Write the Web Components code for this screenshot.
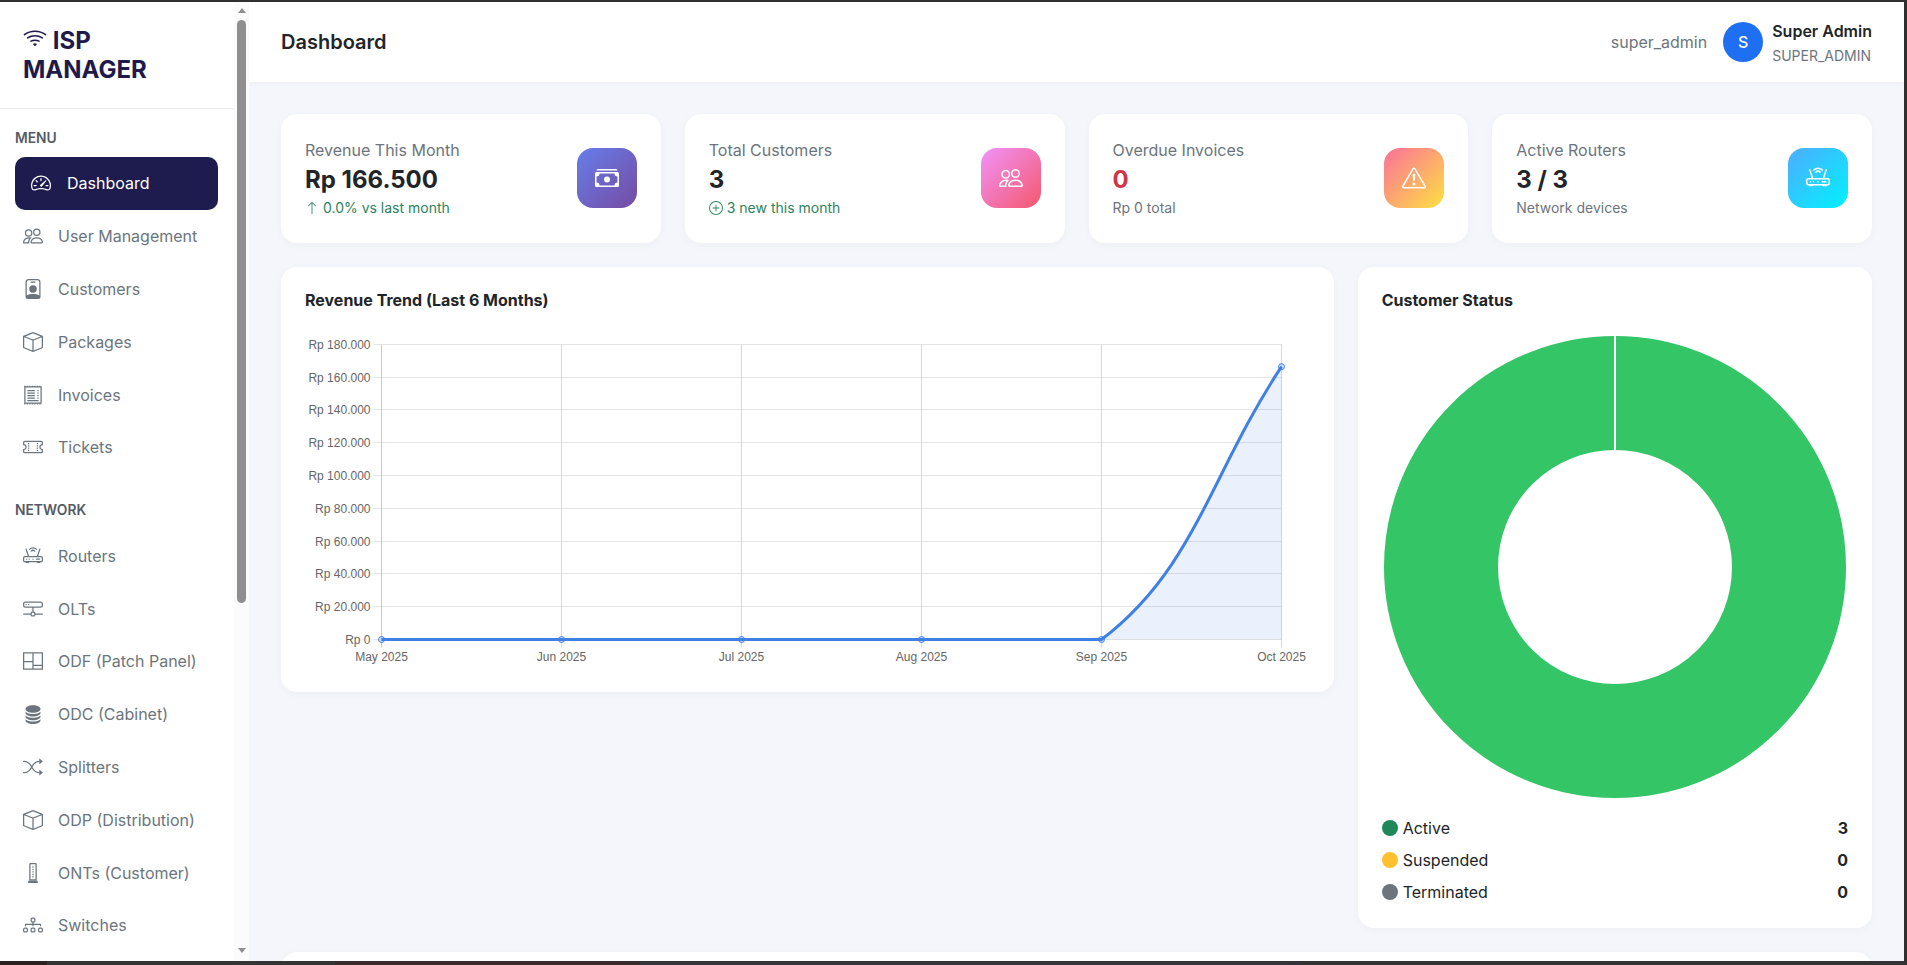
<!DOCTYPE html>
<html lang="en">
<head>
<meta charset="utf-8">
<title>ISP Manager</title>
<style>
  html, body { margin: 0; height: 100%; overflow: hidden; }
  body { font-family: Inter, "Liberation Sans", sans-serif; color: #212529; }
</style>
</head>
<body>
<app-shell>
  <side-nav slot="nav">
    <nav-label>MENU</nav-label>
    <nav-item icon="speedometer" active>Dashboard</nav-item>
    <nav-item icon="people">User Management</nav-item>
    <nav-item icon="badge">Customers</nav-item>
    <nav-item icon="box">Packages</nav-item>
    <nav-item icon="receipt">Invoices</nav-item>
    <nav-item icon="ticket">Tickets</nav-item>
    <nav-label network>NETWORK</nav-label>
    <nav-item icon="router">Routers</nav-item>
    <nav-item icon="hdd">OLTs</nav-item>
    <nav-item icon="panel">ODF (Patch Panel)</nav-item>
    <nav-item icon="database">ODC (Cabinet)</nav-item>
    <nav-item icon="shuffle">Splitters</nav-item>
    <nav-item icon="box">ODP (Distribution)</nav-item>
    <nav-item icon="modem">ONTs (Customer)</nav-item>
    <nav-item icon="diagram">Switches</nav-item>
  </side-nav>
  <top-bar slot="top"></top-bar>
  <stat-row>
    <stat-card label="Revenue This Month" value="Rp 166.500" sub="0.0% vs last month" subicon="arrow" icon="cash" tone="up" grad="#667eea,#764ba2"></stat-card>
    <stat-card label="Total Customers" value="3" sub="3 new this month" subicon="plus" icon="people" tone="up" grad="#f093fb,#f5576c"></stat-card>
    <stat-card label="Overdue Invoices" value="0" sub="Rp 0 total" icon="warning" tone="muted" valuecolor="#d13447" grad="#fa709a,#fee140"></stat-card>
    <stat-card label="Active Routers" value="3 / 3" sub="Network devices" icon="router" tone="muted" grad="#4facfe,#00f2fe"></stat-card>
  </stat-row>
  <chart-row>
    <trend-chart></trend-chart>
    <status-chart></status-chart>
  </chart-row>
  <next-card></next-card>
</app-shell>

<script>
const ICONS = {
  wifi: '<path d="M15.384 6.115a.485.485 0 0 0-.047-.736A12.444 12.444 0 0 0 8 3C5.259 3 2.723 3.882.663 5.379a.485.485 0 0 0-.048.736.518.518 0 0 0 .668.05A11.448 11.448 0 0 1 8 4c2.507 0 4.827.802 6.716 2.164.205.148.49.13.668-.049z"/><path d="M13.229 8.271a.482.482 0 0 0-.063-.745A9.455 9.455 0 0 0 8 6c-1.905 0-3.68.56-5.166 1.526a.48.48 0 0 0-.063.745.525.525 0 0 0 .652.065A8.46 8.46 0 0 1 8 7a8.46 8.46 0 0 1 4.576 1.336c.206.132.48.108.653-.065zm-2.183 2.183c.226-.226.185-.605-.1-.75A6.473 6.473 0 0 0 8 9c-1.06 0-2.062.254-2.946.704-.285.145-.326.524-.1.75l.015.015c.16.16.407.19.611.09A5.478 5.478 0 0 1 8 10c.868 0 1.69.201 2.42.56.203.1.45.07.61-.091l.016-.015zM9.06 12.44c.196-.196.198-.52-.04-.66A1.99 1.99 0 0 0 8 11.5a1.99 1.99 0 0 0-1.02.28c-.238.14-.236.464-.04.66l.706.706a.5.5 0 0 0 .707 0l.707-.707z"/>',
  speedometer: '<path d="M8 4a.5.5 0 0 1 .5.5V6a.5.5 0 0 1-1 0V4.5A.5.5 0 0 1 8 4M3.732 5.732a.5.5 0 0 1 .707 0l.915.914a.5.5 0 1 1-.708.708l-.914-.915a.5.5 0 0 1 0-.707M2 10a.5.5 0 0 1 .5-.5h1.586a.5.5 0 0 1 0 1H2.5A.5.5 0 0 1 2 10m9.5 0a.5.5 0 0 1 .5-.5h1.5a.5.5 0 0 1 0 1H12a.5.5 0 0 1-.5-.5m.754-4.246a.389.389 0 0 0-.527-.02L7.547 9.31a.91.91 0 1 0 1.302 1.258l3.434-4.297a.389.389 0 0 0-.029-.518z"/><path fill-rule="evenodd" d="M0 10a8 8 0 1 1 15.547 2.661c-.442 1.253-1.845 1.602-2.932 1.25C11.309 13.488 9.475 13 8 13c-1.474 0-3.31.488-4.615.911-1.087.352-2.49.003-2.932-1.25A7.988 7.988 0 0 1 0 10m8-7a7 7 0 0 0-6.603 9.329c.203.575.923.876 1.68.63C4.397 12.533 6.358 12 8 12s3.604.532 4.923.96c.757.245 1.477-.056 1.68-.631A7 7 0 0 0 8 3"/>',
  people: '<path d="M15 14s1 0 1-1-1-4-5-4-5 3-5 4 1 1 1 1zm-7.978-1A.261.261 0 0 1 7 12.996c.001-.264.167-1.03.76-1.72C8.312 10.629 9.282 10 11 10c1.717 0 2.687.63 3.24 1.276.593.69.758 1.457.76 1.72l-.008.002a.274.274 0 0 1-.014.002H7.022ZM11 7a2 2 0 1 0 0-4 2 2 0 0 0 0 4m3-2a3 3 0 1 1-6 0 3 3 0 0 1 6 0M6.936 9.28a5.88 5.88 0 0 0-1.23-.247A7.35 7.35 0 0 0 5 9c-4 0-5 3-5 4 0 .667.333 1 1 1h4.216A2.238 2.238 0 0 1 5 13c0-1.01.377-2.042 1.09-2.904.243-.294.526-.569.846-.816M4.92 10A5.493 5.493 0 0 0 4 13H1c0-.26.164-1.03.76-1.724.545-.636 1.492-1.256 3.16-1.275ZM1.5 5.5a3 3 0 1 1 6 0 3 3 0 0 1-6 0m3-2a2 2 0 1 0 0 4 2 2 0 0 0 0-4"/>',
  badge: '<path d="M6.5 2a.5.5 0 0 0 0 1h3a.5.5 0 0 0 0-1zM11 8a3 3 0 1 1-6 0 3 3 0 0 1 6 0"/><path d="M4.5 0A2.5 2.5 0 0 0 2 2.5V14a2 2 0 0 0 2 2h8a2 2 0 0 0 2-2V2.5A2.5 2.5 0 0 0 11.5 0zM3 2.5A1.5 1.5 0 0 1 4.5 1h7A1.5 1.5 0 0 1 13 2.5v10.795a4.2 4.2 0 0 0-.776-.492C11.392 12.387 10.063 12 8 12s-3.392.387-4.224.803a4.2 4.2 0 0 0-.776.492z"/>',
  box: '<path d="M8.186 1.113a.5.5 0 0 0-.372 0L1.846 3.5 8 5.961 14.154 3.5zM15 4.239l-6.5 2.6v7.922l6.5-2.6V4.24zM7.5 14.762V6.838L1 4.239v7.925zM7.443.184a1.5 1.5 0 0 1 1.114 0l7.129 2.852A.5.5 0 0 1 16 3.5v8.662a1 1 0 0 1-.629.928l-7.185 2.874a.5.5 0 0 1-.372 0L.63 13.09a1 1 0 0 1-.63-.928V3.5a.5.5 0 0 1 .314-.464z"/>',
  receipt: '<path d="M3.5 4h6v1h-6zm0 2h6v1h-6zm0 2h6v1h-6zm0 2h6v1h-6zm8-6h1v1h-1zm0 2h1v1h-1zm0 2h1v1h-1zm0 2h1v1h-1zm-8 2h9v1h-9z"/><path fill="none" stroke="currentColor" stroke-width="1" d="M1.5 1.5 h13 v13 h-13z"/><path fill="none" stroke="currentColor" stroke-width="1" stroke-dasharray="1 1" d="M1 1h14M1 15h14"/>',
  ticket: '<path d="M4 4.85v.9h1v-.9H4Zm7 0v.9h1v-.9h-1Zm-7 1.8v.9h1v-.9H4Zm7 0v.9h1v-.9h-1Zm-7 1.8v.9h1v-.9H4Zm7 0v.9h1v-.9h-1Zm-7 1.8v.9h1v-.9H4Zm7 0v.9h1v-.9h-1Z"/><path d="M1.5 3A1.5 1.5 0 0 0 0 4.5V6a.5.5 0 0 0 .5.5 1.5 1.5 0 1 1 0 3 .5.5 0 0 0-.5.5v1.5A1.5 1.5 0 0 0 1.5 13h13a1.5 1.5 0 0 0 1.5-1.5V10a.5.5 0 0 0-.5-.5 1.5 1.5 0 0 1 0-3A.5.5 0 0 0 16 6V4.5A1.5 1.5 0 0 0 14.5 3h-13ZM1 4.5a.5.5 0 0 1 .5-.5h13a.5.5 0 0 1 .5.5v1.05a2.5 2.5 0 0 0 0 4.9v1.05a.5.5 0 0 1-.5.5h-13a.5.5 0 0 1-.5-.5v-1.05a2.5 2.5 0 0 0 0-4.9V4.5Z"/>',
  router: '<path d="M5.525 3.025a3.5 3.5 0 0 1 4.95 0 .5.5 0 1 0 .707-.707 4.5 4.5 0 0 0-6.364 0 .5.5 0 0 0 .707.707"/><path d="M6.94 4.44a1.5 1.5 0 0 1 2.12 0 .5.5 0 0 0 .708-.708 2.5 2.5 0 0 0-3.536 0 .5.5 0 0 0 .707.707Z"/><path d="M2.974 2.342a.5.5 0 1 0-.948.316L3.806 8H1.5A1.5 1.5 0 0 0 0 9.5v2A1.5 1.5 0 0 0 1.5 13H2a.5.5 0 0 0 .5.5h2A.5.5 0 0 0 5 13h6a.5.5 0 0 0 .5.5h2a.5.5 0 0 0 .5-.5h.5a1.5 1.5 0 0 0 1.5-1.5v-2A1.5 1.5 0 0 0 14.5 8h-2.306l1.78-5.342a.5.5 0 1 0-.948-.316L11.14 8H4.86zM14.5 9a.5.5 0 0 1 .5.5v2a.5.5 0 0 1-.5.5h-13a.5.5 0 0 1-.5-.5v-2a.5.5 0 0 1 .5-.5z"/><path d="M8.5 10.5a.5.5 0 1 1-1 0 .5.5 0 0 1 1 0m-5 0a.5.5 0 1 1-1 0 .5.5 0 0 1 1 0m2 0a.5.5 0 1 1-1 0 .5.5 0 0 1 1 0m5-.5h3v1h-3z"/>',
  hdd: '<path d="M4.5 5a.5.5 0 1 0 0-1 .5.5 0 0 0 0 1M3 4.5a.5.5 0 1 1-1 0 .5.5 0 0 1 1 0"/><path d="M0 4a2 2 0 0 1 2-2h12a2 2 0 0 1 2 2v1a2 2 0 0 1-2 2H8.5v3a1.5 1.5 0 0 1 1.5 1.5h5.5a.5.5 0 0 1 0 1H10A1.5 1.5 0 0 1 8.5 14h-1A1.5 1.5 0 0 1 6 12.5H.5a.5.5 0 0 1 0-1H6A1.5 1.5 0 0 1 7.5 10V7H2a2 2 0 0 1-2-2zm1 0v1a1 1 0 0 0 1 1h12a1 1 0 0 0 1-1V4a1 1 0 0 0-1-1H2a1 1 0 0 0-1 1m6 7.5v1a.5.5 0 0 0 .5.5h1a.5.5 0 0 0 .5-.5v-1a.5.5 0 0 0-.5-.5h-1a.5.5 0 0 0-.5.5"/>',
  panel: '<path fill="none" stroke="currentColor" d="M.5 1.5h15v13H.5zM8 1.5V14.5M.5 8.5H8M8 11.5h7.5"/>',
  database: '<path d="M3.904 1.777C4.978 1.289 6.427 1 8 1s3.022.289 4.096.777C13.125 2.245 14 2.993 14 4s-.875 1.755-1.904 2.223C11.022 6.711 9.573 7 8 7s-3.022-.289-4.096-.777C2.875 5.755 2 5.007 2 4s.875-1.755 1.904-2.223"/><path d="M2 6.161V7c0 1.007.875 1.755 1.904 2.223C4.978 9.71 6.427 10 8 10s3.022-.289 4.096-.777C13.125 8.755 14 8.007 14 7v-.839c-.457.432-1.004.751-1.49.972C11.278 7.693 9.682 8 8 8s-3.278-.307-4.51-.867c-.486-.22-1.033-.54-1.49-.972"/><path d="M2 9.161V10c0 1.007.875 1.755 1.904 2.223C4.978 12.711 6.427 13 8 13s3.022-.289 4.096-.777C13.125 11.755 14 11.007 14 10v-.839c-.457.432-1.004.751-1.49.972-1.232.56-2.828.867-4.51.867s-3.278-.307-4.51-.867c-.486-.22-1.033-.54-1.49-.972"/><path d="M2 12.161V13c0 1.007.875 1.755 1.904 2.223C4.978 15.711 6.427 16 8 16s3.022-.289 4.096-.777C13.125 14.755 14 14.007 14 13v-.839c-.457.432-1.004.751-1.49.972-1.232.56-2.828.867-4.51.867s-3.278-.307-4.51-.867c-.486-.22-1.033-.54-1.49-.972"/>',
  shuffle: '<path fill-rule="evenodd" d="M0 3.5A.5.5 0 0 1 .5 3H1c2.202 0 3.827 1.24 4.874 2.418.49.552.865 1.102 1.126 1.532.26-.43.636-.98 1.126-1.532C9.173 4.24 10.798 3 13 3v1c-1.798 0-3.173 1.01-4.126 2.082A9.624 9.624 0 0 0 7.556 8a9.624 9.624 0 0 0 1.317 1.918C9.828 10.99 11.204 12 13 12v1c-2.202 0-3.827-1.24-4.874-2.418A10.595 10.595 0 0 1 7 9.05c-.26.43-.636.98-1.126 1.532C4.827 11.76 3.202 13 1 13H.5a.5.5 0 0 1 0-1H1c1.798 0 3.173-1.01 4.126-2.082A9.624 9.624 0 0 0 6.444 8a9.624 9.624 0 0 0-1.317-1.918C4.172 5.01 2.796 4 1 4H.5a.5.5 0 0 1-.5-.5z"/><path d="M13 5.466V1.534a.25.25 0 0 1 .41-.192l2.36 1.966c.12.1.12.284 0 .384l-2.36 1.966a.25.25 0 0 1-.41-.192zm0 9v-3.932a.25.25 0 0 1 .41-.192l2.36 1.966c.12.1.12.284 0 .384l-2.36 1.966a.25.25 0 0 1-.41-.192z"/>',
  modem: '<path fill="none" stroke="currentColor" d="M5.5 1a.5.5 0 0 1 .5-.5h4a.5.5 0 0 1 .5.5v12.5h-5z"/><path d="M7.5 2.5h1v1h-1zm0 2h1v1h-1zm0 2h1v1h-1zm0 2h1v1h-1zm0 2h1v1h-1zM4.5 14h7l.5 2H4z"/>',
  diagram: '<path fill-rule="evenodd" d="M6 3.5A1.5 1.5 0 0 1 7.5 2h1A1.5 1.5 0 0 1 10 3.5v1A1.5 1.5 0 0 1 8.5 6v1H14a.5.5 0 0 1 .5.5v1a.5.5 0 0 1-1 0V8h-5v.5a.5.5 0 0 1-1 0V8h-5v.5a.5.5 0 0 1-1 0v-1A.5.5 0 0 1 2 7h5.5V6A1.5 1.5 0 0 1 6 4.5zM8.5 5a.5.5 0 0 0 .5-.5v-1a.5.5 0 0 0-.5-.5h-1a.5.5 0 0 0-.5.5v1a.5.5 0 0 0 .5.5zM0 11.5A1.5 1.5 0 0 1 1.5 10h1A1.5 1.5 0 0 1 4 11.5v1A1.5 1.5 0 0 1 2.5 14h-1A1.5 1.5 0 0 1 0 12.5zm1.5-.5a.5.5 0 0 0-.5.5v1a.5.5 0 0 0 .5.5h1a.5.5 0 0 0 .5-.5v-1a.5.5 0 0 0-.5-.5zm4.5.5A1.5 1.5 0 0 1 7.5 10h1a1.5 1.5 0 0 1 1.5 1.5v1A1.5 1.5 0 0 1 8.5 14h-1A1.5 1.5 0 0 1 6 12.5zm1.5-.5a.5.5 0 0 0-.5.5v1a.5.5 0 0 0 .5.5h1a.5.5 0 0 0 .5-.5v-1a.5.5 0 0 0-.5-.5zm4.5.5a1.5 1.5 0 0 1 1.5-1.5h1a1.5 1.5 0 0 1 1.5 1.5v1a1.5 1.5 0 0 1-1.5 1.5h-1a1.5 1.5 0 0 1-1.5-1.5zm1.5-.5a.5.5 0 0 0-.5.5v1a.5.5 0 0 0 .5.5h1a.5.5 0 0 0 .5-.5v-1a.5.5 0 0 0-.5-.5z"/>',
  cash: '<path d="M1 3a1 1 0 0 1 1-1h12a1 1 0 0 1 1 1zm7 8a2 2 0 1 0 0-4 2 2 0 0 0 0 4"/><path fill-rule="evenodd" d="M0 5a1 1 0 0 1 1-1h14a1 1 0 0 1 1 1v8a1 1 0 0 1-1 1H1a1 1 0 0 1-1-1zm3 0a2 2 0 0 1-2 2v4a2 2 0 0 1 2 2h10a2 2 0 0 1 2-2V7a2 2 0 0 1-2-2z"/>',
  warning: '<path d="M7.938 2.016A.13.13 0 0 1 8.002 2a.13.13 0 0 1 .063.016.146.146 0 0 1 .054.057l6.857 11.667c.036.06.035.124.002.183a.163.163 0 0 1-.054.06.116.116 0 0 1-.066.017H1.146a.115.115 0 0 1-.066-.017.163.163 0 0 1-.054-.06.176.176 0 0 1 .002-.183L7.884 2.073a.147.147 0 0 1 .054-.057zm1.044-.45a1.13 1.13 0 0 0-1.96 0L.165 13.233c-.457.778.091 1.767.98 1.767h13.713c.889 0 1.438-.99.98-1.767L8.982 1.566z"/><path d="M7.002 12a1 1 0 1 1 2 0 1 1 0 0 1-2 0zM7.1 5.995a.905.905 0 1 1 1.8 0l-.35 3.507a.552.552 0 0 1-1.1 0L7.1 5.995z"/>',
  plus: '<path d="M8 15A7 7 0 1 1 8 1a7 7 0 0 1 0 14m0 1A8 8 0 1 0 8 0a8 8 0 0 0 0 16"/><path d="M8 4a.5.5 0 0 1 .5.5v3h3a.5.5 0 0 1 0 1h-3v3a.5.5 0 0 1-1 0v-3h-3a.5.5 0 0 1 0-1h3v-3A.5.5 0 0 1 8 4"/>',
  arrow: '<path fill-rule="evenodd" d="M8 15a.5.5 0 0 0 .5-.5V2.707l3.146 3.147a.5.5 0 0 0 .708-.708l-4-4a.5.5 0 0 0-.708 0l-4 4a.5.5 0 1 0 .708.708L7.5 2.707V14.5a.5.5 0 0 0 .5.5"/>'
};

class BiIcon extends HTMLElement {
  constructor() {
    super();
    const size = this.getAttribute("size") || 16;
    this.attachShadow({ mode: "open" }).innerHTML = `
      <style>
        :host { display: inline-flex; flex: none; width: ${size}px; height: ${size}px; }
        svg { display: block; width: 100%; height: 100%; fill: currentColor; }
      </style>
      <svg viewBox="0 0 16 16">${ICONS[this.getAttribute("name")] || ""}</svg>`;
  }
}
customElements.define("bi-icon", BiIcon);

class AppShell extends HTMLElement {
  constructor() {
    super();
    this.attachShadow({ mode: "open" }).innerHTML = `
      <style>
        :host {
          display: flex; box-sizing: border-box; height: 965px; padding: 2px 3px 4px 0;
          background:
            linear-gradient(to right, #2a2320 0 47px, #343434 47px 335px, #3a2b2b 335px 640px, #34343a 640px 1300px, #333 1300px) bottom / 100% 4px no-repeat,
            #303030;
        }
        .right { flex: 1; min-width: 0; display: flex; flex-direction: column; background: #f4f6fb; }
        main { flex: 1; min-height: 0; overflow: hidden; padding: 32px; display: flex; flex-direction: column; gap: 24px; }
      </style>
      <slot name="nav"></slot>
      <div class="right">
        <slot name="top"></slot>
        <main><slot></slot></main>
      </div>`;
  }
}
customElements.define("app-shell", AppShell);

class SideNav extends HTMLElement {
  constructor() {
    super();
    this.attachShadow({ mode: "open" }).innerHTML = `
      <style>
        :host { display: flex; flex: none; width: 249px; background: #fff; }
        .col { flex: 1; min-width: 0; overflow: hidden; }
        .brand {
          padding: 24px 24px 24px 23px; height: 58px; box-sizing: content-box;
          border-bottom: 1px solid #e9ecef;
          font-size: 24px; font-weight: 700; line-height: 28.8px; color: #1e1b4b;
        }
        .brand bi-icon { vertical-align: -1px; }
        nav { padding: 0 16px 0 15px; }
        .bar { flex: none; width: 15px; background: #fbfbfc; display: flex; flex-direction: column; align-items: center; }
        .up, .down { width: 0; height: 0; border-left: 4.5px solid transparent; border-right: 4.5px solid transparent; }
        .up { margin-top: 6px; border-bottom: 5px solid #8f8f8f; }
        .thumb { width: 9px; height: 583px; margin-top: 7px; border-radius: 5px; background: #8f8f8f; }
        .down { margin-top: auto; margin-bottom: 8px; border-top: 5px solid #8f8f8f; }
      </style>
      <div class="col">
        <div class="brand"><bi-icon name="wifi" size="24"></bi-icon> ISP MANAGER</div>
        <nav><slot></slot></nav>
      </div>
      <div class="bar"><div class="up"></div><div class="thumb"></div><div class="down"></div></div>`;
  }
}
customElements.define("side-nav", SideNav);

class NavLabel extends HTMLElement {
  constructor() {
    super();
    this.attachShadow({ mode: "open" }).innerHTML = `
      <style>
        :host {
          display: block; height: 20px; line-height: 20px; margin: 19px 0 9px;
          font-size: 13.8px; font-weight: 600; color: #555b66;
        }
        :host([network]) { margin-top: 26.6px; }
      </style>
      <slot></slot>`;
  }
}
customElements.define("nav-label", NavLabel);

class NavItem extends HTMLElement {
  constructor() {
    super();
    this.attachShadow({ mode: "open" }).innerHTML = `
      <style>
        :host {
          display: flex; align-items: center; gap: 15px; height: 52.8px; box-sizing: border-box;
          padding-left: 8px; margin-right: 0; border-radius: 10px;
          font-size: 16px; color: #6c757d;
        }
        :host([active]) { background: #1e1c4e; color: #fff; padding-left: 16px; gap: 16px; }
      </style>
      <bi-icon name="${this.getAttribute("icon")}" size="20"></bi-icon>
      <span><slot></slot></span>`;
  }
}
customElements.define("nav-item", NavItem);

class TopBar extends HTMLElement {
  constructor() {
    super();
    this.attachShadow({ mode: "open" }).innerHTML = `
      <style>
        :host {
          display: flex; align-items: center; flex: none; height: 80px; box-sizing: border-box;
          padding: 0 32px; background: #fff; box-shadow: 0 2px 4px rgba(0,0,0,.03);
        }
        h1 { margin: 0; font-size: 20px; font-weight: 600; color: #212529; }
        .who { margin-left: auto; font-size: 16px; color: #6c757d; }
        .avatar {
          width: 40px; height: 40px; margin: 0 9px 0 16px; border-radius: 50%; background: #1f6ff2;
          color: #fff; font-size: 16px; font-weight: 500; display: flex; align-items: center; justify-content: center;
        }
        .name { font-size: 16px; font-weight: 600; color: #212529; line-height: 20px; margin-top: 2px; }
        .role { font-size: 14px; color: #6c757d; line-height: 20px; margin-top: 5px; }
      </style>
      <h1>Dashboard</h1>
      <div class="who">super_admin</div>
      <div class="avatar">S</div>
      <div><div class="name">Super Admin</div><div class="role">SUPER_ADMIN</div></div>`;
  }
}
customElements.define("top-bar", TopBar);

class StatRow extends HTMLElement {
  constructor() {
    super();
    this.attachShadow({ mode: "open" }).innerHTML = `
      <style>:host { display: grid; grid-template-columns: repeat(4, 1fr); gap: 24px; flex: none; }</style>
      <slot></slot>`;
  }
}
customElements.define("stat-row", StatRow);

class StatCard extends HTMLElement {
  constructor() {
    super();
    const a = (n) => this.getAttribute(n) || "";
    const subIcon = a("subicon") ? `<bi-icon name="${a("subicon")}" size="14"></bi-icon>` : "";
    this.attachShadow({ mode: "open" }).innerHTML = `
      <style>
        :host {
          display: flex; align-items: center; justify-content: space-between; box-sizing: border-box; height: 129px;
          padding: 24px; background: #fff; border-radius: 16px; box-shadow: 0 2px 10px rgba(0,0,0,.03);
        }
        .label { font-size: 16px; line-height: 24px; color: #6c757d; }
        .value { font-size: 24px; font-weight: 700; line-height: 33px; padding-top: 1px; color: ${a("valuecolor") || "#212529"}; }
        .sub { display: flex; align-items: center; gap: 4px; font-size: 14px; line-height: 23px; }
        .sub.up { color: #2b8360; }
        .sub.muted { color: #6c757d; }
        .icon {
          width: 60px; height: 60px; margin-bottom: 1px; border-radius: 16px; color: #fff;
          background: linear-gradient(135deg, ${a("grad")});
          display: flex; align-items: center; justify-content: center;
        }
      </style>
      <div>
        <div class="label">${a("label")}</div>
        <div class="value">${a("value")}</div>
        <div class="sub ${a("tone")}">${subIcon}<span>${a("sub")}</span></div>
      </div>
      <div class="icon"><bi-icon name="${a("icon")}" size="24"></bi-icon></div>`;
  }
}
customElements.define("stat-card", StatCard);

class ChartRow extends HTMLElement {
  constructor() {
    super();
    this.attachShadow({ mode: "open" }).innerHTML = `
      <style>:host { display: grid; grid-template-columns: calc((100% + 24px) * 2 / 3 - 24px) 1fr; gap: 24px; align-items: start; flex: none; }</style>
      <slot></slot>`;
  }
}
customElements.define("chart-row", ChartRow);

const CARD_CSS = `
  :host { display: block; box-sizing: border-box; padding: 24px; background: #fff; border-radius: 16px; box-shadow: 0 2px 10px rgba(0,0,0,.03); min-width: 0; }
  h2 { margin: 0 0 24px; font-size: 16px; font-weight: 700; line-height: 19.2px; color: #212529; }
  svg { display: block; }
`;

class TrendChart extends HTMLElement {
  constructor() {
    super();
    // plot coordinates, relative to the svg box
    const x0 = 76.5, pitch = 180, yTop = 10.5, yBottom = 305.5;
    const rows = [10.5, 43.5, 75.5, 108.5, 141.5, 174.5, 207.5, 239.5, 272.5, 305.5];
    const values = ["180.000", "160.000", "140.000", "120.000", "100.000", "80.000", "60.000", "40.000", "20.000", "0"];
    const months = ["May 2025", "Jun 2025", "Jul 2025", "Aug 2025", "Sep 2025", "Oct 2025"];
    const xs = months.map((m, i) => x0 + i * pitch);
    const peak = yBottom - 166500 / 180000 * (yBottom - yTop);
    const sep = xs[4], oct = xs[5];
    const curve = `C${sep + 92.9} ${yBottom - 70.5} ${sep + 108} ${peak + 109.3} ${oct} ${peak}`;
    let g = "";
    rows.forEach((y, i) => {
      g += `<line x1="${x0 - 8}" x2="${oct}" y1="${y}" y2="${y}" stroke="#e5e5e5"/>`;
      g += `<text x="${x0 - 11}" y="${y + 4}" text-anchor="end">Rp ${values[i]}</text>`;
    });
    xs.forEach((x, i) => {
      g += `<line x1="${x}" x2="${x}" y1="${yTop}" y2="${yBottom + 8}" stroke="${i == 0 ? "#c8c8c8" : "#d8d8d8"}"/>`;
      g += `<text x="${x}" y="${yBottom + 21}" text-anchor="middle">${months[i]}</text>`;
    });
    const dots = xs.map((x, i) => `<circle cx="${x}" cy="${i == 5 ? peak : yBottom}" r="3" fill="rgba(64,128,228,.2)" stroke="#4080e4"/>`).join("");
    this.attachShadow({ mode: "open" }).innerHTML = `
      <style>
        ${CARD_CSS}
        :host { height: 425px; }
        text { font: 12px "Liberation Sans", Arial, sans-serif; fill: #666; }
      </style>
      <h2>Revenue Trend (Last 6 Months)</h2>
      <svg width="1005" height="334" viewBox="0 0 1005 334">
        ${g}
        <path d="M${sep} ${yBottom}${curve}V${yBottom}Z" fill="rgba(64,128,228,.11)"/>
        <path d="M${x0} ${yBottom}H${sep}${curve}" fill="none" stroke="#4080e4" stroke-width="3"/>
        ${dots}
      </svg>`;
  }
}
customElements.define("trend-chart", TrendChart);

class StatusChart extends HTMLElement {
  constructor() {
    super();
    const rows = [["Active", "#1f8759", 3], ["Suspended", "#ffc02e", 0], ["Terminated", "#6c757d", 0]];
    const legend = rows.map(([name, color, n]) => `
      <div class="row"><i style="background:${color}"></i><span>${name}</span><b>${n}</b></div>`).join("");
    this.attachShadow({ mode: "open" }).innerHTML = `
      <style>
        ${CARD_CSS}
        :host { height: 661px; }
        .legend { margin-top: 16px; display: flex; flex-direction: column; gap: 8px; }
        .row { display: flex; align-items: center; height: 24px; font-size: 16px; color: #212529; }
        i { width: 16px; height: 16px; border-radius: 50%; margin-right: 5px; }
        b { margin-left: auto; font-weight: 700; }
      </style>
      <h2>Customer Status</h2>
      <svg width="466" height="466" viewBox="0 0 466 466" style="margin: 0 auto">
        <circle cx="233" cy="233" r="174" fill="none" stroke="#33c566" stroke-width="114"/>
        <line x1="233" x2="233" y1="2" y2="116" stroke="#fff" stroke-width="2"/>
      </svg>
      <div class="legend">${legend}</div>`;
  }
}
customElements.define("status-chart", StatusChart);

class NextCard extends HTMLElement {
  constructor() {
    super();
    this.attachShadow({ mode: "open" }).innerHTML = `
      <style>:host { display: block; flex: none; height: 300px; background: #fff; border-radius: 16px; box-shadow: 0 2px 10px rgba(0,0,0,.03); }</style>`;
  }
}
customElements.define("next-card", NextCard);
</script>
</body>
</html>
